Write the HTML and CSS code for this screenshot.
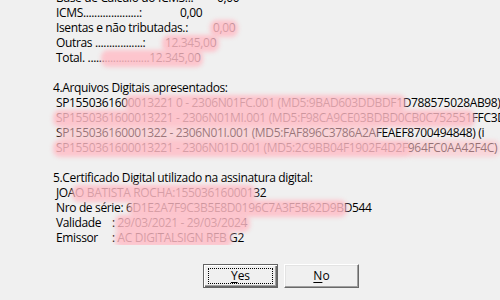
FILE: index.html
```html
<!DOCTYPE html>
<html>
<head>
<meta charset="utf-8">
<link rel="stylesheet" href="styles.css">
</head>
<body>
<div class="dialog">
  <div class="content">
    <div class="row sub"><span class="lbl w-base">Base de Cálculo do ICMS..:</span>0,00</div>
    <div class="row sub"><span class="lbl w-icms">ICMS....................:</span>0,00</div>
    <div class="row sub"><span class="lbl w-isen">Isentas e não tributadas.:</span><span class="red">0,00</span></div>
    <div class="row sub"><span class="lbl w-out">Outras .................:</span><span class="red">12.345,00</span></div>
    <div class="row sub">Total. ......<span class="red">................12.345,00</span></div>
    <div class="row blank"></div>
    <div class="row">4.Arquivos Digitais apresentados:</div>
    <div class="row sub">SP155036160<span class="red">0013221 0 - 2306N01FC.001 (MD5:9BAD603DDBDF1</span>D788575028AB98)</div>
    <div class="row sub"><span class="red">SP1550361600013221 - 2306N01MI.001 (MD5:F98CA9CE03BDBD0CB0C752551</span>FFC3D2A</div>
    <div class="row sub">S<span class="red light">P155036160001322 - 2306N01I.001 (MD5:FAF896C3786A2A</span>FEAEF8700494848) (i</div>
    <div class="row sub"><span class="red">SP1550361600013221 - 2306N01D.001 (MD5:2C9BB04F1902F4D2F</span><span class="red light">964FC0AA42F4C)</span></div>
    <div class="row blank"></div>
    <div class="row">5.Certificado Digital utilizado na assinatura digital:</div>
    <div class="row sub">JOA<span class="red">O BATISTA ROCHA:155036160001</span>32</div>
    <div class="row sub">Nro de série: 6<span class="red">D1E2A7F9C3B5E8D0196C7A3F5B62D9B</span>D544</div>
    <div class="row sub"><span class="lbl w-key">Validade</span>: <span class="red">29/03/2021 - 29/03/2024</span></div>
    <div class="row sub"><span class="lbl w-key">Emissor</span>: <span class="red">AC DIGITALSIGN RFB </span>G2</div>
  </div>
  <div class="footer">
    <button class="btn default"><span class="focus"><u>Y</u>es</span></button>
    <button class="btn"><span class="plain"><u>N</u>o</span></button>
  </div>
</div>
</body>
</html>
```
FILE: styles.css
```css
html, body {
  margin: 0;
  padding: 0;
}
body {
  width: 500px;
  height: 300px;
  overflow: hidden;
  background: #f0f0f0;
  font-family: "Open Sans", "Noto Sans", sans-serif;
  font-size: 12px;
  color: #000;
}
.dialog {
  height: 300px;
  display: flex;
  flex-direction: column;
}
.content {
  margin-top: -10px;
  padding-left: 53px;
  line-height: 15px;
  letter-spacing: -0.35px;
  overflow: hidden;
}
.row {
  height: 15px;
  white-space: pre;
}
.sub {
  padding-left: 3px;
}
.lbl {
  display: inline-block;
}
.w-base { width: 161px; }
.w-icms { width: 124px; }
.w-isen { width: 157px; }
.w-out { width: 109px; }
.w-key { width: 56px; }
.red {
  position: relative;
}
.red::after {
  content: "";
  position: absolute;
  left: -3px;
  right: -3px;
  top: 1px;
  bottom: -1px;
  background: rgba(255, 188, 198, 0.84);
  border-radius: 7px;
  filter: blur(2px);
}
.red.light::after {
  background: rgba(255, 195, 202, 0.6);
}
.footer {
  margin-top: auto;
  display: flex;
  gap: 6px;
  padding-left: 203px;
  padding-bottom: 12px;
}
.btn {
  width: 75px;
  height: 24px;
  padding: 0;
  margin: 0;
  background: #f0f0f0;
  font-family: "Open Sans", "Noto Sans", sans-serif;
  font-size: 12px;
  color: #000;
  border: 1px solid;
  border-color: #ffffff #696969 #696969 #ffffff;
  box-shadow: inset -1px -1px 0 #a0a0a0, inset 1px 1px 0 #e3e3e3;
  display: flex;
  align-items: center;
  justify-content: center;
}
.btn.default {
  border: 1px solid #646464;
  box-shadow: inset 1px 1px 0 #ffffff, inset -1px -1px 0 #696969, inset -2px -2px 0 #a0a0a0;
}
.focus {
  width: 63px;
  height: 14px;
  line-height: 14px;
  border: 1px dotted #000;
  text-align: center;
}
.plain {
  line-height: 14px;
}
u {
  text-decoration-thickness: 1px;
  text-underline-offset: 2px;
}
```
